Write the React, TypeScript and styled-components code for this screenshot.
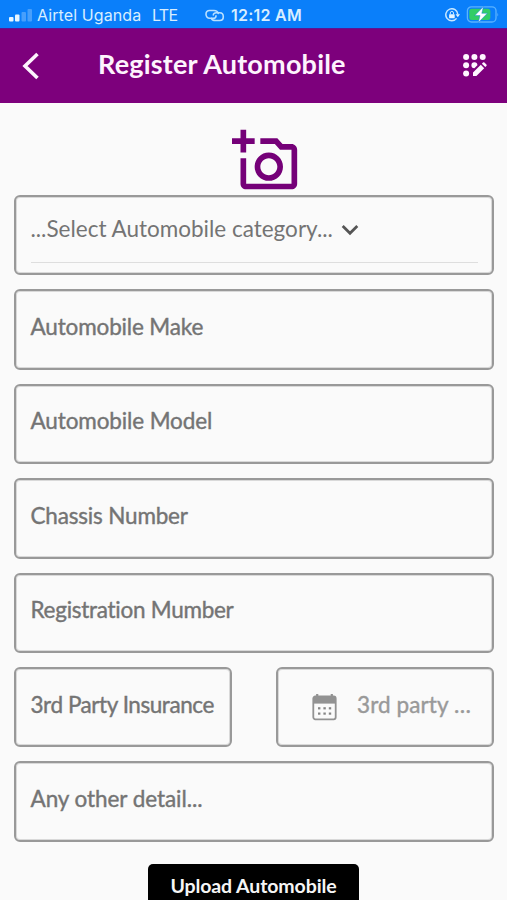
import React from "react";
import styled, { createGlobalStyle } from "styled-components";

const GlobalStyle = createGlobalStyle`
  * { box-sizing: border-box; }
  html, body { margin: 0; height: 100%; overflow: hidden; background: #fafafa; }
  body { font-family: Lato, "Open Sans", sans-serif; font-variant-ligatures: none; }
  svg { display: block; flex: none; }
`;

const Screen = styled.div`
  display: flex;
  flex-direction: column;
  width: 507px;
  height: 900px;
  overflow: hidden;
  background: #fafafa;
`;

const StatusBar = styled.header`
  display: flex;
  align-items: center;
  flex: none;
  height: 28px;
  padding: 2px 8px 0 9px;
  background: #0a7ffa;
  color: #d8eeff;
  font-family: Inter, sans-serif;
`;

const StatusText = styled.span<{ $width: number; $bold?: boolean; $spacing?: number }>`
  flex: none;
  width: ${(p) => p.$width}px;
  font-size: 16px;
  line-height: 20px;
  font-weight: ${(p) => (p.$bold ? 600 : 400)};
  letter-spacing: ${(p) => p.$spacing ?? 0}px;
  white-space: nowrap;
`;

const Spacer = styled.div`
  flex: 1;
`;

const AppBar = styled.nav`
  display: flex;
  align-items: center;
  flex: none;
  height: 75px;
  padding: 0 19px 0 22px;
  background: #7d007c;
  border-top: 1px solid #5b1595;
  color: #fdf3fd;
`;

const Title = styled.h1`
  flex: 1;
  margin: 0 0 5px 58px;
  font-size: 27px;
  line-height: 36px;
  font-weight: 700;
  letter-spacing: 0.2px;
  white-space: nowrap;
`;

const Photo = styled.div`
  display: flex;
  justify-content: center;
  flex: none;
  height: 92px;
  padding: 24px 0 0 25px;
`;

const Form = styled.form`
  display: flex;
  flex-direction: column;
  gap: 14px;
  padding: 0 13px 0 14px;
`;

const Row = styled.div`
  display: flex;
  justify-content: space-between;
`;

const Field = styled.div<{ $half?: boolean; $select?: boolean }>`
  display: flex;
  flex-direction: column;
  width: ${(p) => (p.$half ? "218px" : "100%")};
  height: 80.4px;
  padding: ${(p) => (p.$select ? 14.4 : 17.6)}px 14px 0 14.5px;
  border: 2px solid #999;
  border-radius: 6px;
  box-shadow: inset 0 0 0 1px rgba(120, 120, 120, 0.25);
`;

const FieldLine = styled.div<{ $indent?: boolean }>`
  display: flex;
  align-items: center;
  height: 36px;
  padding-left: ${(p) => (p.$indent ? 19.5 : 0)}px;
`;

const Label = styled.span<{ $spacing?: number; $tone?: string; $light?: boolean }>`
  color: ${(p) => p.$tone ?? "#747474"};
  font-size: 22.5px;
  line-height: 32px;
  font-weight: 400;
  -webkit-text-stroke: ${(p) => (p.$light ? 0 : 0.4)}px currentColor;
  letter-spacing: ${(p) => p.$spacing ?? 0}px;
  white-space: nowrap;
`;

const Underline = styled.div`
  height: 1px;
  margin-top: 14.6px;
  background: #dedede;
`;

const Upload = styled.button`
  flex: none;
  align-self: center;
  width: 211px;
  height: 48px;
  margin: 22px 0 0;
  padding: 0 0 3px;
  border: 0;
  border-radius: 5px;
  background: #000;
  color: #f5f5f5;
  font: 700 19.5px/28px Lato, sans-serif;
  letter-spacing: -0.1px;
  white-space: nowrap;
`;

const IconSlot = styled.span<{ $left?: number; $top?: number }>`
  margin: ${(p) => p.$top ?? 0}px 0 0 ${(p) => p.$left ?? 0}px;
`;

const Signal = () => (
  <svg width="24" height="13" viewBox="0 0 24 13" fill="#e8f6ff">
    <rect x="0" y="8" width="4.5" height="4.5" rx="1" />
    <rect x="6" y="5.5" width="4.5" height="7" rx="1" />
    <rect x="12.5" y="3" width="4.5" height="9.5" rx="1" opacity=".28" />
    <rect x="18.5" y="0" width="4.5" height="12.5" rx="1" opacity=".28" />
  </svg>
);

const Hotspot = () => (
  <svg width="20" height="13" viewBox="0 0 20 13" fill="none" stroke="#b9e0ff" strokeWidth="1.6" strokeLinecap="round">
    <path d="M11 6.9C11 8.2 9.8 9.2 8.3 9.2H4.6C2.6 9.2 1 7.6 1 5.3S2.6 1.5 4.6 1.5H9C11.2 1.5 12.8 2.6 13.2 4.4" />
    <path d="M8.3 5.9C8.3 4.7 9.6 3.8 11.2 3.8H14.7C16.7 3.8 18.3 5.4 18.3 7.7S16.7 11.5 14.7 11.5H10.4C8.4 11.5 7 10.8 6.4 9.4" />
  </svg>
);

const RotationLock = () => (
  <svg width="15" height="14" viewBox="0 0 15 14" fill="none" stroke="#c8e8ff" strokeWidth="1.5">
    <path d="M11.6 10.4A6 6 0 1 1 12.8 6.3" />
    <path d="M10.6 6.2H15L12.8 9.2Z" fill="#e5f5ff" stroke="none" />
    <rect x="4.1" y="6.2" width="5.6" height="4" rx=".5" fill="#e5f5ff" stroke="none" />
    <path d="M5.3 6.5V5A1.6 1.6 0 0 1 8.5 5V6.5" strokeWidth="1" />
  </svg>
);

const Battery = () => (
  <svg width="33" height="18" viewBox="0 0 33 18">
    <rect x="1.4" y=".8" width="28.6" height="15.2" rx="4" fill="none" stroke="#5bb3ff" strokeWidth="1.3" />
    <rect x="3.3" y="2.8" width="21" height="11.2" rx="2.5" fill="#32cd66" />
    <path d="M31.4 6.4Q32.9 8.4 31.4 10.4Z" fill="#5bb3ff" />
    <path d="M17.5 .6L8.8 9.6H14L12.3 16.6L21.4 7.3H15.8Z" fill="#fff" stroke="#1684dd" strokeWidth=".5" />
  </svg>
);

const Back = () => (
  <svg width="18" height="28" viewBox="0 0 18 28" fill="none" stroke="#fdf3fd" strokeWidth="3.6">
    <path d="M15.5 2L3 14L15.5 26" />
  </svg>
);

const Registration = () => (
  <svg width="26" height="26" viewBox="0 0 26 26" fill="#fff5ff">
    <circle cx="4.1" cy="4.1" r="3" />
    <circle cx="12.4" cy="4.1" r="3" />
    <circle cx="20.7" cy="4.1" r="3" />
    <circle cx="4.1" cy="12.2" r="3" />
    <path d="M15.4 12.2A3 3 0 1 0 12.4 15.2Z" />
    <circle cx="4.1" cy="20.4" r="3" />
    <path d="M11 19.6L18.8 11.8L22.2 15.2L14.4 23H11ZM19.9 10.7L21 9.6Q21.7 8.9 22.4 9.6L24.4 11.6Q25.1 12.3 24.4 13L23.3 14.1Z" />
  </svg>
);

const AddPhoto = () => (
  <svg width="68" height="68" viewBox="0 0 24 24" fill="#750078">
    <path d="M21 6h-3.17L16 4h-6v2h5.12l1.83 2H21v12H5v-9H3v9c0 1.1.9 2 2 2h16c1.1 0 2-.9 2-2V8c0-1.1-.9-2-2-2zM8 14c0 2.76 2.24 5 5 5s5-2.24 5-5-2.24-5-5-5-5 2.24-5 5zm5-3c1.65 0 3 1.35 3 3s-1.35 3-3 3-3-1.35-3-3 1.35-3 3-3zM5 6h3V4H5V1H3v3H0v2h3v3h2z" />
  </svg>
);

const Chevron = () => (
  <svg width="18" height="12" viewBox="0 0 18 12" fill="none" stroke="#555" strokeWidth="2.8">
    <path d="M1.7 2L9 9.2L16.3 2" />
  </svg>
);

const Calendar = () => (
  <svg width="25" height="28" viewBox="0 0 25 28">
    <path d="M5.2 1V5M19.8 1V5" stroke="#929292" strokeWidth="2.2" />
    <rect x="1.3" y="3.5" width="22.4" height="22.8" rx="2" fill="#fafafa" stroke="#929292" strokeWidth="1.8" />
    <path d="M1.3 4H23.7V10.6H1.3Z" fill="#929292" />
    <g fill="#858585">
      {[6, 11.4, 16.8].map((x) =>
        [14.2, 19.5].map((y) => <rect key={`${x}-${y}`} x={x} y={y} width="2.4" height="2.2" />)
      )}
    </g>
  </svg>
);

export default function App() {
  return (
    <Screen>
      <GlobalStyle />
      <StatusBar>
        <Signal />
        <IconSlot $left={4} />
        <StatusText $width={115} $spacing={0.1}>Airtel Uganda</StatusText>
        <StatusText $width={53} $spacing={-0.7}>LTE</StatusText>
        <Hotspot />
        <IconSlot $left={6} />
        <StatusText $width={80} $bold $spacing={0.25}>12:12 AM</StatusText>
        <Spacer />
        <RotationLock />
        <IconSlot $left={6} />
        <Battery />
      </StatusBar>
      <AppBar>
        <Back />
        <Title>Register Automobile</Title>
        <Registration />
      </AppBar>
      <Photo>
        <AddPhoto />
      </Photo>
      <Form>
        <Field $select>
          <FieldLine>
            <Label $light>...Select Automobile category...</Label>
            <IconSlot $left={8.5} $top={1}>
              <Chevron />
            </IconSlot>
          </FieldLine>
          <Underline />
        </Field>
        <Field>
          <FieldLine><Label $spacing={-0.15}>Automobile Make</Label></FieldLine>
        </Field>
        <Field>
          <FieldLine><Label $spacing={-0.12}>Automobile Model</Label></FieldLine>
        </Field>
        <Field>
          <FieldLine><Label $spacing={-0.18}>Chassis Number</Label></FieldLine>
        </Field>
        <Field>
          <FieldLine><Label $spacing={-0.27}>Registration Mumber</Label></FieldLine>
        </Field>
        <Row>
          <Field $half>
            <FieldLine><Label $spacing={-0.44}>3rd Party Insurance</Label></FieldLine>
          </Field>
          <Field $half>
            <FieldLine $indent>
              <IconSlot $top={4}>
                <Calendar />
              </IconSlot>
              <IconSlot $left={20} />
              <Label $tone="#999" $spacing={0.1}>3rd party …</Label>
            </FieldLine>
          </Field>
        </Row>
        <Field>
          <FieldLine><Label $spacing={-0.06}>Any other detail...</Label></FieldLine>
        </Field>
      </Form>
      <Upload type="button">Upload Automobile</Upload>
    </Screen>
  );
}
